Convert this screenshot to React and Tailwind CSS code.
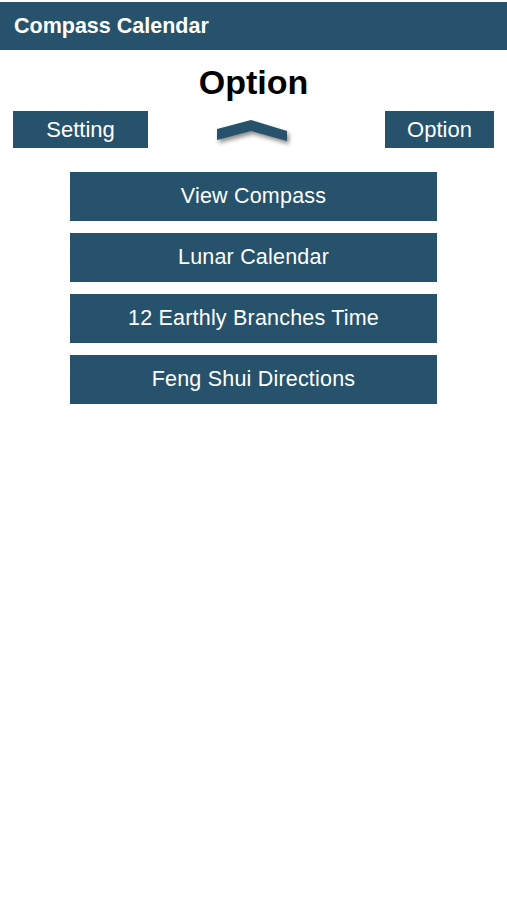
import React from 'react';

const items = ['View Compass', 'Lunar Calendar', '12 Earthly Branches Time', 'Feng Shui Directions'];

const Chevron = () => (
  <svg width="74" height="26" viewBox="0 0 74 26" className="drop-shadow-[2px_3px_2px_rgba(0,0,0,0.45)]">
    <polygon points="34,0 70,11 70,21 34,11 0,20 0,9" fill="#27526c" />
  </svg>
);

export default function App() {
  return (
    <div className="w-[507px] h-[900px] bg-white pt-[2px] font-['Liberation_Sans',Arial,sans-serif]">
      {/* Header */}
      <div className="h-[48px] bg-[#27526c] flex items-center px-[14px]">
        <span className="text-white font-bold text-[21.5px]">Compass Calendar</span>
      </div>

      {/* Title */}
      <div className="pt-[12px] h-[52px] flex justify-center">
        <h1 className="text-[34px] leading-[40px] font-bold text-black">Option</h1>
      </div>

      {/* Nav row */}
      <div className="mt-[9px] grid grid-cols-[1fr_auto_1fr] items-center px-[13px]">
        <button className="justify-self-start w-[135px] h-[37px] bg-[#27526c] text-white text-[22px]">Setting</button>
        <div className="pt-[6px] pl-[1px]">
          <Chevron />
        </div>
        <button className="justify-self-end w-[109px] h-[37px] bg-[#27526c] text-white text-[22px]">Option</button>
      </div>

      {/* Menu */}
      <div className="mt-[24px] flex flex-col items-center gap-[12px]">
        {items.map((t) => (
          <button key={t} className="w-[367px] h-[49px] bg-[#27526c] text-white text-[21.5px] tracking-[0.2px]">
            {t}
          </button>
        ))}
      </div>
    </div>
  );
}
